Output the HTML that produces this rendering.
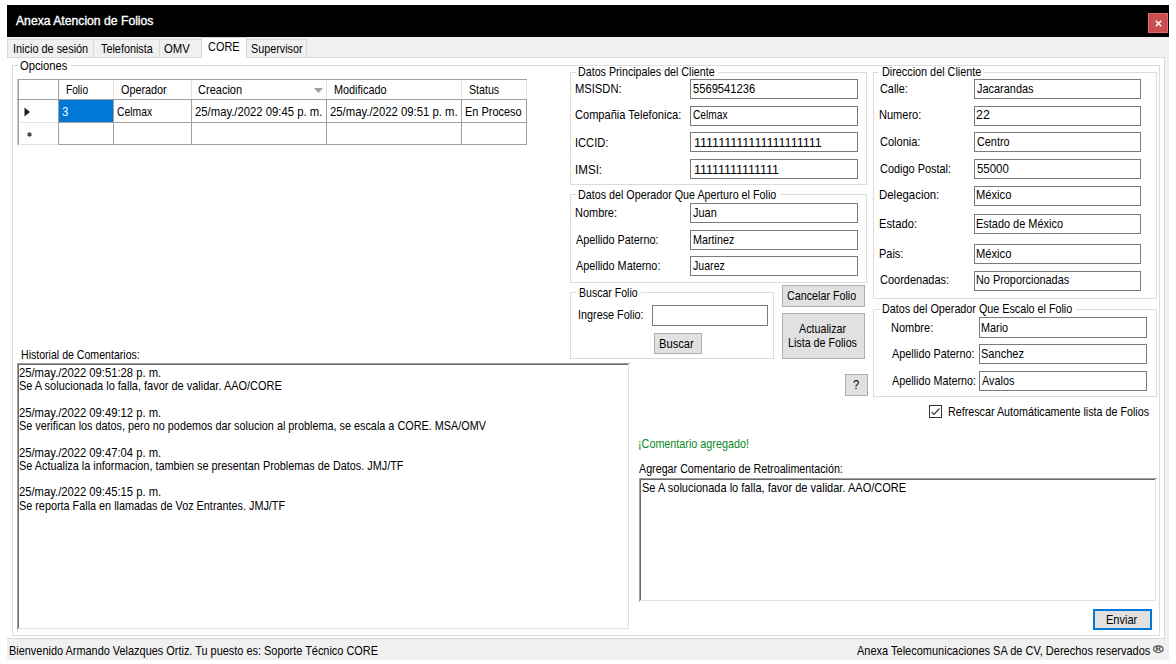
<!DOCTYPE html>
<html><head><meta charset="utf-8"><style>
html,body{margin:0;padding:0;background:#fff;width:1176px;height:664px;overflow:hidden}
.b{position:absolute;box-sizing:content-box}
.t{position:absolute;white-space:nowrap;font-family:"Liberation Sans",sans-serif;line-height:1;transform-origin:0 0}
</style></head><body>
<div class="b" style="left:7px;top:5px;width:1162px;height:655px;background:#f0f0f0"></div>
<div class="b" style="left:7px;top:5px;width:1162px;height:32px;background:#000"></div>
<div class="t" style="left:15.60px;top:15.00px;font-size:12px;color:#fff;transform:scaleX(1.0148);-webkit-text-stroke:0.35px #fff;">Anexa Atencion de Folios</div>
<div class="b" style="left:1148px;top:13px;width:18px;height:18px;border:1px solid #e06a6a;background:#c94f4f"></div>
<svg class="b" style="left:1154px;top:19px" width="9" height="9" viewBox="0 0 9 9"><path d="M1.8 1.8L7.2 7.2M7.2 1.8L1.8 7.2" stroke="#fff" stroke-width="1.5"/></svg>
<div class="b" style="left:7px;top:57px;width:1158px;height:582px;background:#fff"></div>
<div class="b" style="left:7px;top:57px;width:1158px;height:1px;background:#d9d9d9"></div>
<div class="b" style="left:1164px;top:57px;width:1px;height:582px;background:#d9d9d9"></div>
<div class="b" style="left:7px;top:638px;width:1158px;height:1px;background:#d9d9d9"></div>
<div class="b" style="left:7px;top:39px;width:85px;height:17px;border:1px solid #d9d9d9;background:#f0f0f0"></div>
<div class="b" style="left:93px;top:39px;width:65px;height:17px;border:1px solid #d9d9d9;background:#f0f0f0"></div>
<div class="b" style="left:159px;top:39px;width:41px;height:17px;border:1px solid #d9d9d9;background:#f0f0f0"></div>
<div class="b" style="left:246px;top:39px;width:59px;height:17px;border:1px solid #d9d9d9;background:#f0f0f0"></div>
<div class="b" style="left:201px;top:37px;width:46px;height:21px;background:#fff;border:1px solid #d9d9d9;border-bottom:none;box-sizing:border-box"></div>
<div class="t" style="left:12.79px;top:42.00px;font-size:13px;color:#000;transform:scaleX(0.8390);">Inicio de sesión</div>
<div class="t" style="left:100.73px;top:42.00px;font-size:13px;color:#000;transform:scaleX(0.8339);">Telefonista</div>
<div class="t" style="left:164.28px;top:41.80px;font-size:13px;color:#000;transform:scaleX(0.8724);">OMV</div>
<div class="t" style="left:207.50px;top:40.00px;font-size:13px;color:#000;transform:scaleX(0.8411);">CORE</div>
<div class="t" style="left:251.19px;top:41.80px;font-size:13px;color:#000;transform:scaleX(0.8293);">Supervisor</div>
<div class="b" style="left:12px;top:65px;width:1146px;height:569px;border:1px solid #dcdcdc;background:transparent"></div>
<div class="b" style="left:18px;top:64px;width:53px;height:3px;background:#fff"></div>
<div class="t" style="left:20.48px;top:59.30px;font-size:13px;color:#000;transform:scaleX(0.8627);">Opciones</div>
<div class="b" style="left:17px;top:79px;width:510px;height:66px;background:#fff"></div>
<div class="b" style="left:17px;top:79px;width:510px;height:1px;background:#a0a0a0"></div>
<div class="b" style="left:17px;top:79px;width:1px;height:66px;background:#c8c8c8"></div>
<div class="b" style="left:18px;top:79px;width:1px;height:66px;background:#a0a0a0"></div>
<div class="b" style="left:17px;top:99px;width:510px;height:1px;background:#a0a0a0"></div>
<div class="b" style="left:526px;top:80px;width:1px;height:19px;background:#e3e3e3"></div>
<div class="b" style="left:526px;top:99px;width:1px;height:46px;background:#a0a0a0"></div>
<div class="b" style="left:58px;top:79px;width:1px;height:66px;background:#a0a0a0"></div>
<div class="b" style="left:113px;top:80px;width:1px;height:19px;background:#e3e3e3"></div>
<div class="b" style="left:113px;top:100px;width:1px;height:45px;background:#a0a0a0"></div>
<div class="b" style="left:191px;top:80px;width:1px;height:19px;background:#e3e3e3"></div>
<div class="b" style="left:191px;top:100px;width:1px;height:45px;background:#a0a0a0"></div>
<div class="b" style="left:326px;top:80px;width:1px;height:19px;background:#e3e3e3"></div>
<div class="b" style="left:326px;top:100px;width:1px;height:45px;background:#a0a0a0"></div>
<div class="b" style="left:461px;top:80px;width:1px;height:19px;background:#e3e3e3"></div>
<div class="b" style="left:461px;top:100px;width:1px;height:45px;background:#a0a0a0"></div>
<div class="b" style="left:59px;top:122px;width:468px;height:1px;background:#a0a0a0"></div>
<div class="b" style="left:59px;top:144px;width:468px;height:1px;background:#a0a0a0"></div>
<div class="b" style="left:20px;top:122px;width:38px;height:1px;background:#e3e3e3"></div>
<div class="b" style="left:20px;top:144px;width:38px;height:1px;background:#e3e3e3"></div>
<div class="b" style="left:59px;top:100px;width:54px;height:22px;background:#0078d7"></div>
<svg class="b" style="left:24px;top:107px" width="7" height="10" viewBox="0 0 7 10"><path d="M0.5 0.5L6 5L0.5 9.5Z" fill="#222"/></svg>
<svg class="b" style="left:26px;top:131px" width="7" height="7" viewBox="0 0 7 7"><path d="M3.5 1.2V5.8M1.5 2.3L5.5 4.7M1.5 4.7L5.5 2.3" stroke="#444" stroke-width="1.4"/><circle cx="3.5" cy="3.5" r="1.6" fill="#444"/></svg>
<svg class="b" style="left:314px;top:88px" width="10" height="6" viewBox="0 0 10 6"><path d="M0 0H9L4.5 5Z" fill="#a0a0a0"/></svg>
<div class="t" style="left:66.12px;top:83.20px;font-size:13px;color:#000;transform:scaleX(0.7820);">Folio</div>
<div class="t" style="left:120.70px;top:83.20px;font-size:13px;color:#000;transform:scaleX(0.8321);">Operador</div>
<div class="t" style="left:198.09px;top:83.30px;font-size:13px;color:#000;transform:scaleX(0.8478);">Creacion</div>
<div class="t" style="left:334.36px;top:83.30px;font-size:13px;color:#000;transform:scaleX(0.8352);">Modificado</div>
<div class="t" style="left:469.19px;top:83.30px;font-size:13px;color:#000;transform:scaleX(0.8194);">Status</div>
<div class="t" style="left:61.85px;top:105.00px;font-size:13px;color:#fff;transform:scaleX(0.8730);">3</div>
<div class="t" style="left:116.52px;top:105.00px;font-size:13px;color:#000;transform:scaleX(0.7972);">Celmax</div>
<div class="t" style="left:195.08px;top:105.00px;font-size:13px;color:#000;transform:scaleX(0.8695);">25/may./2022 09:45 p. m.</div>
<div class="t" style="left:329.88px;top:105.00px;font-size:13px;color:#000;transform:scaleX(0.8715);">25/may./2022 09:51 p. m.</div>
<div class="t" style="left:464.66px;top:105.00px;font-size:13px;color:#000;transform:scaleX(0.8432);">En Proceso</div>
<div class="b" style="left:570px;top:72px;width:295px;height:111px;border:1px solid #dcdcdc;background:transparent"></div>
<div class="b" style="left:576px;top:71px;width:142px;height:3px;background:#fff"></div>
<div class="t" style="left:578.48px;top:65.30px;font-size:13px;color:#000;transform:scaleX(0.8221);">Datos Principales del Cliente</div>
<div class="t" style="left:575.34px;top:82.00px;font-size:13px;color:#000;transform:scaleX(0.8599);">MSISDN:</div>
<div class="b" style="left:690px;top:79px;width:166px;height:18px;border:1px solid #7a7a7a;background:#fff"></div>
<div class="t" style="left:693.17px;top:82.00px;font-size:13px;color:#000;transform:scaleX(0.8597);">5569541236</div>
<div class="t" style="left:575.09px;top:108.10px;font-size:13px;color:#000;transform:scaleX(0.8513);">Compañia Telefonica:</div>
<div class="b" style="left:690px;top:106px;width:166px;height:18px;border:1px solid #7a7a7a;background:#fff"></div>
<div class="t" style="left:693.03px;top:108.10px;font-size:13px;color:#000;transform:scaleX(0.7834);">Celmax</div>
<div class="t" style="left:574.67px;top:135.70px;font-size:13px;color:#000;transform:scaleX(0.8556);">ICCID:</div>
<div class="b" style="left:690px;top:132px;width:166px;height:18px;border:1px solid #7a7a7a;background:#fff"></div>
<div class="t" style="left:693.73px;top:135.70px;font-size:13px;color:#000;transform:scaleX(0.9641);">111111111111111111111</div>
<div class="t" style="left:574.63px;top:162.50px;font-size:13px;color:#000;transform:scaleX(0.8929);">IMSI:</div>
<div class="b" style="left:690px;top:159px;width:166px;height:18px;border:1px solid #7a7a7a;background:#fff"></div>
<div class="t" style="left:693.74px;top:162.50px;font-size:13px;color:#000;transform:scaleX(0.9564);">11111111111111</div>
<div class="b" style="left:873px;top:72px;width:282px;height:225px;border:1px solid #dcdcdc;background:transparent"></div>
<div class="b" style="left:879px;top:71px;width:105px;height:3px;background:#fff"></div>
<div class="t" style="left:882.07px;top:65.30px;font-size:13px;color:#000;transform:scaleX(0.8326);">Direccion del Cliente</div>
<div class="t" style="left:879.60px;top:82.00px;font-size:13px;color:#000;transform:scaleX(0.8381);">Calle:</div>
<div class="b" style="left:974px;top:79px;width:165px;height:18px;border:1px solid #7a7a7a;background:#fff"></div>
<div class="t" style="left:976.83px;top:82.00px;font-size:13px;color:#000;transform:scaleX(0.8408);">Jacarandas</div>
<div class="t" style="left:879.25px;top:108.10px;font-size:13px;color:#000;transform:scaleX(0.8491);">Numero:</div>
<div class="b" style="left:974px;top:106px;width:165px;height:18px;border:1px solid #7a7a7a;background:#fff"></div>
<div class="t" style="left:976.43px;top:108.10px;font-size:13px;color:#000;transform:scaleX(0.9545);">22</div>
<div class="t" style="left:879.59px;top:135.00px;font-size:13px;color:#000;transform:scaleX(0.8478);">Colonia:</div>
<div class="b" style="left:974px;top:132px;width:165px;height:18px;border:1px solid #7a7a7a;background:#fff"></div>
<div class="t" style="left:976.50px;top:135.00px;font-size:13px;color:#000;transform:scaleX(0.8338);">Centro</div>
<div class="t" style="left:879.60px;top:161.60px;font-size:13px;color:#000;transform:scaleX(0.8406);">Codigo Postal:</div>
<div class="b" style="left:974px;top:159px;width:165px;height:18px;border:1px solid #7a7a7a;background:#fff"></div>
<div class="t" style="left:976.56px;top:161.60px;font-size:13px;color:#000;transform:scaleX(0.8807);">55000</div>
<div class="t" style="left:879.22px;top:188.30px;font-size:13px;color:#000;transform:scaleX(0.8782);">Delegacion:</div>
<div class="b" style="left:974px;top:186px;width:165px;height:18px;border:1px solid #7a7a7a;background:#fff"></div>
<div class="t" style="left:976.14px;top:188.30px;font-size:13px;color:#000;transform:scaleX(0.8586);">México</div>
<div class="t" style="left:879.24px;top:217.10px;font-size:13px;color:#000;transform:scaleX(0.8619);">Estado:</div>
<div class="b" style="left:974px;top:214px;width:165px;height:18px;border:1px solid #7a7a7a;background:#fff"></div>
<div class="t" style="left:976.16px;top:217.10px;font-size:13px;color:#000;transform:scaleX(0.8418);">Estado de México</div>
<div class="t" style="left:879.26px;top:246.90px;font-size:13px;color:#000;transform:scaleX(0.8433);">Pais:</div>
<div class="b" style="left:974px;top:244px;width:165px;height:18px;border:1px solid #7a7a7a;background:#fff"></div>
<div class="t" style="left:976.14px;top:246.90px;font-size:13px;color:#000;transform:scaleX(0.8586);">México</div>
<div class="t" style="left:879.59px;top:273.30px;font-size:13px;color:#000;transform:scaleX(0.8463);">Coordenadas:</div>
<div class="b" style="left:974px;top:271px;width:165px;height:18px;border:1px solid #7a7a7a;background:#fff"></div>
<div class="t" style="left:976.16px;top:273.30px;font-size:13px;color:#000;transform:scaleX(0.8371);">No Proporcionadas</div>
<div class="b" style="left:570px;top:194px;width:295px;height:87px;border:1px solid #dcdcdc;background:transparent"></div>
<div class="b" style="left:576px;top:193px;width:204px;height:3px;background:#fff"></div>
<div class="t" style="left:578.17px;top:187.70px;font-size:13px;color:#000;transform:scaleX(0.8263);">Datos del Operador Que Aperturo el Folio</div>
<div class="t" style="left:575.36px;top:206.00px;font-size:13px;color:#000;transform:scaleX(0.8428);">Nombre:</div>
<div class="b" style="left:690px;top:203px;width:166px;height:18px;border:1px solid #7a7a7a;background:#fff"></div>
<div class="t" style="left:693.03px;top:206.00px;font-size:13px;color:#000;transform:scaleX(0.8419);">Juan</div>
<div class="t" style="left:576.00px;top:232.60px;font-size:13px;color:#000;transform:scaleX(0.8335);">Apellido Paterno:</div>
<div class="b" style="left:690px;top:230px;width:166px;height:18px;border:1px solid #7a7a7a;background:#fff"></div>
<div class="t" style="left:692.67px;top:232.60px;font-size:13px;color:#000;transform:scaleX(0.8299);">Martinez</div>
<div class="t" style="left:576.00px;top:259.40px;font-size:13px;color:#000;transform:scaleX(0.8342);">Apellido Materno:</div>
<div class="b" style="left:690px;top:256px;width:166px;height:18px;border:1px solid #7a7a7a;background:#fff"></div>
<div class="t" style="left:693.04px;top:259.40px;font-size:13px;color:#000;transform:scaleX(0.8168);">Juarez</div>
<div class="b" style="left:570px;top:292px;width:202px;height:65px;border:1px solid #dcdcdc;background:transparent"></div>
<div class="b" style="left:576px;top:291px;width:65px;height:3px;background:#fff"></div>
<div class="t" style="left:578.79px;top:285.60px;font-size:13px;color:#000;transform:scaleX(0.8119);">Buscar Folio</div>
<div class="t" style="left:578.00px;top:308.00px;font-size:13px;color:#000;transform:scaleX(0.8325);">Ingrese Folio:</div>
<div class="b" style="left:652px;top:305px;width:114px;height:19px;border:1px solid #7a7a7a;background:#fff"></div>
<div class="b" style="left:654px;top:333px;width:46px;height:19px;border:1px solid #adadad;background:#e1e1e1"></div>
<div class="t" style="left:659.14px;top:336.50px;font-size:13px;color:#000;transform:scaleX(0.8575);">Buscar</div>
<div class="b" style="left:782px;top:285px;width:81px;height:20px;border:1px solid #adadad;background:#e1e1e1"></div>
<div class="t" style="left:787.20px;top:289.40px;font-size:13px;color:#000;transform:scaleX(0.8259);">Cancelar Folio</div>
<div class="b" style="left:782px;top:313px;width:81px;height:44px;border:1px solid #adadad;background:#e1e1e1"></div>
<div class="t" style="left:798.50px;top:322.30px;font-size:13px;color:#000;transform:scaleX(0.8260);">Actualizar</div>
<div class="t" style="left:787.78px;top:335.50px;font-size:13px;color:#000;transform:scaleX(0.8228);">Lista de Folios</div>
<div class="b" style="left:845px;top:374px;width:21px;height:20px;border:1px solid #adadad;background:#e1e1e1"></div>
<div class="t" style="left:852.87px;top:378.40px;font-size:13px;color:#000;transform:scaleX(0.8571);">?</div>
<div class="b" style="left:873px;top:309px;width:282px;height:86px;border:1px solid #dcdcdc;background:transparent"></div>
<div class="b" style="left:880px;top:308px;width:196px;height:3px;background:#fff"></div>
<div class="t" style="left:882.17px;top:302.20px;font-size:13px;color:#000;transform:scaleX(0.8279);">Datos del Operador Que Escalo el Folio</div>
<div class="t" style="left:891.25px;top:320.70px;font-size:13px;color:#000;transform:scaleX(0.8470);">Nombre:</div>
<div class="b" style="left:979px;top:317px;width:166px;height:19px;border:1px solid #7a7a7a;background:#fff"></div>
<div class="t" style="left:980.67px;top:320.70px;font-size:13px;color:#000;transform:scaleX(0.8323);">Mario</div>
<div class="t" style="left:892.00px;top:347.20px;font-size:13px;color:#000;transform:scaleX(0.8335);">Apellido Paterno:</div>
<div class="b" style="left:979px;top:344px;width:166px;height:18px;border:1px solid #7a7a7a;background:#fff"></div>
<div class="t" style="left:981.08px;top:347.20px;font-size:13px;color:#000;transform:scaleX(0.8485);">Sanchez</div>
<div class="t" style="left:892.00px;top:373.80px;font-size:13px;color:#000;transform:scaleX(0.8302);">Apellido Materno:</div>
<div class="b" style="left:979px;top:371px;width:166px;height:18px;border:1px solid #7a7a7a;background:#fff"></div>
<div class="t" style="left:981.50px;top:373.80px;font-size:13px;color:#000;transform:scaleX(0.8333);">Avalos</div>
<div class="b" style="left:929px;top:405px;width:11px;height:11px;border:1px solid #333;background:#fff"></div>
<svg class="b" style="left:929px;top:405px" width="13" height="13" viewBox="0 0 13 13"><path d="M2.5 6.8L5 9.3L10.5 3.5" stroke="#333" stroke-width="1.2" fill="none"/></svg>
<div class="t" style="left:948.07px;top:405.40px;font-size:13px;color:#000;transform:scaleX(0.8257);">Refrescar Automáticamente lista de Folios</div>
<div class="t" style="left:638.16px;top:437.30px;font-size:13px;color:#0b8a1c;transform:scaleX(0.8299);">¡Comentario agregado!</div>
<div class="t" style="left:639.40px;top:461.70px;font-size:13px;color:#000;transform:scaleX(0.8248);">Agregar Comentario de Retroalimentación:</div>
<div class="b" style="left:639px;top:478px;width:518px;height:124px;background:#fff"></div>
<div class="b" style="left:639px;top:478px;width:518px;height:1px;background:#a0a0a0"></div>
<div class="b" style="left:639px;top:478px;width:1px;height:124px;background:#a0a0a0"></div>
<div class="b" style="left:640px;top:479px;width:516px;height:1px;background:#696969"></div>
<div class="b" style="left:640px;top:479px;width:1px;height:122px;background:#696969"></div>
<div class="b" style="left:640px;top:600px;width:516px;height:1px;background:#e3e3e3"></div>
<div class="b" style="left:1155px;top:479px;width:1px;height:122px;background:#e3e3e3"></div>
<div class="t" style="left:641.78px;top:480.70px;font-size:13px;color:#000;transform:scaleX(0.8480);">Se A solucionada lo falla, favor de validar. AAO/CORE</div>
<div class="b" style="left:1093px;top:609px;width:55px;height:17px;border:2px solid #0078d7;background:#e1e1e1"></div>
<div class="t" style="left:1105.85px;top:613.20px;font-size:13px;color:#000;transform:scaleX(0.8487);">Enviar</div>
<div class="t" style="left:21.39px;top:348.00px;font-size:13px;color:#000;transform:scaleX(0.8136);">Historial de Comentarios:</div>
<div class="b" style="left:17px;top:363px;width:613px;height:267px;background:#fff"></div>
<div class="b" style="left:17px;top:363px;width:613px;height:1px;background:#a0a0a0"></div>
<div class="b" style="left:17px;top:363px;width:1px;height:267px;background:#a0a0a0"></div>
<div class="b" style="left:18px;top:364px;width:611px;height:1px;background:#696969"></div>
<div class="b" style="left:18px;top:364px;width:1px;height:265px;background:#696969"></div>
<div class="b" style="left:18px;top:628px;width:611px;height:1px;background:#e3e3e3"></div>
<div class="b" style="left:628px;top:364px;width:1px;height:265px;background:#e3e3e3"></div>
<div class="t" style="left:19.28px;top:366.00px;font-size:13px;color:#000;transform:scaleX(0.8643);">25/may./2022 09:51:28 p. m.</div>
<div class="t" style="left:19.38px;top:379.25px;font-size:13px;color:#000;transform:scaleX(0.8438);">Se A solucionada lo falla, favor de validar. AAO/CORE</div>
<div class="t" style="left:19.28px;top:405.75px;font-size:13px;color:#000;transform:scaleX(0.8643);">25/may./2022 09:49:12 p. m.</div>
<div class="t" style="left:19.38px;top:419.00px;font-size:13px;color:#000;transform:scaleX(0.8338);">Se verifican los datos, pero no podemos dar solucion al problema, se escala a CORE. MSA/OMV</div>
<div class="t" style="left:19.28px;top:445.50px;font-size:13px;color:#000;transform:scaleX(0.8643);">25/may./2022 09:47:04 p. m.</div>
<div class="t" style="left:19.38px;top:458.75px;font-size:13px;color:#000;transform:scaleX(0.8354);">Se Actualiza la informacion, tambien se presentan Problemas de Datos. JMJ/TF</div>
<div class="t" style="left:19.28px;top:485.25px;font-size:13px;color:#000;transform:scaleX(0.8643);">25/may./2022 09:45:15 p. m.</div>
<div class="t" style="left:19.38px;top:498.50px;font-size:13px;color:#000;transform:scaleX(0.8332);">Se reporta Falla en llamadas de Voz Entrantes. JMJ/TF</div>
<div class="t" style="left:8.96px;top:644.00px;font-size:13px;color:#000;transform:scaleX(0.8403);">Bienvenido Armando Velazques Ortiz. Tu puesto es: Soporte Técnico CORE</div>
<div class="t" style="left:857.00px;top:644.00px;font-size:13px;color:#000;transform:scaleX(0.8456);">Anexa Telecomunicaciones SA de CV, Derechos reservados</div>
<div class="t" style="left:1152.56px;top:645.00px;font-size:10px;color:#333;transform:scaleX(1.4306);-webkit-text-stroke:0.2px #333;">®</div>
</body></html>
